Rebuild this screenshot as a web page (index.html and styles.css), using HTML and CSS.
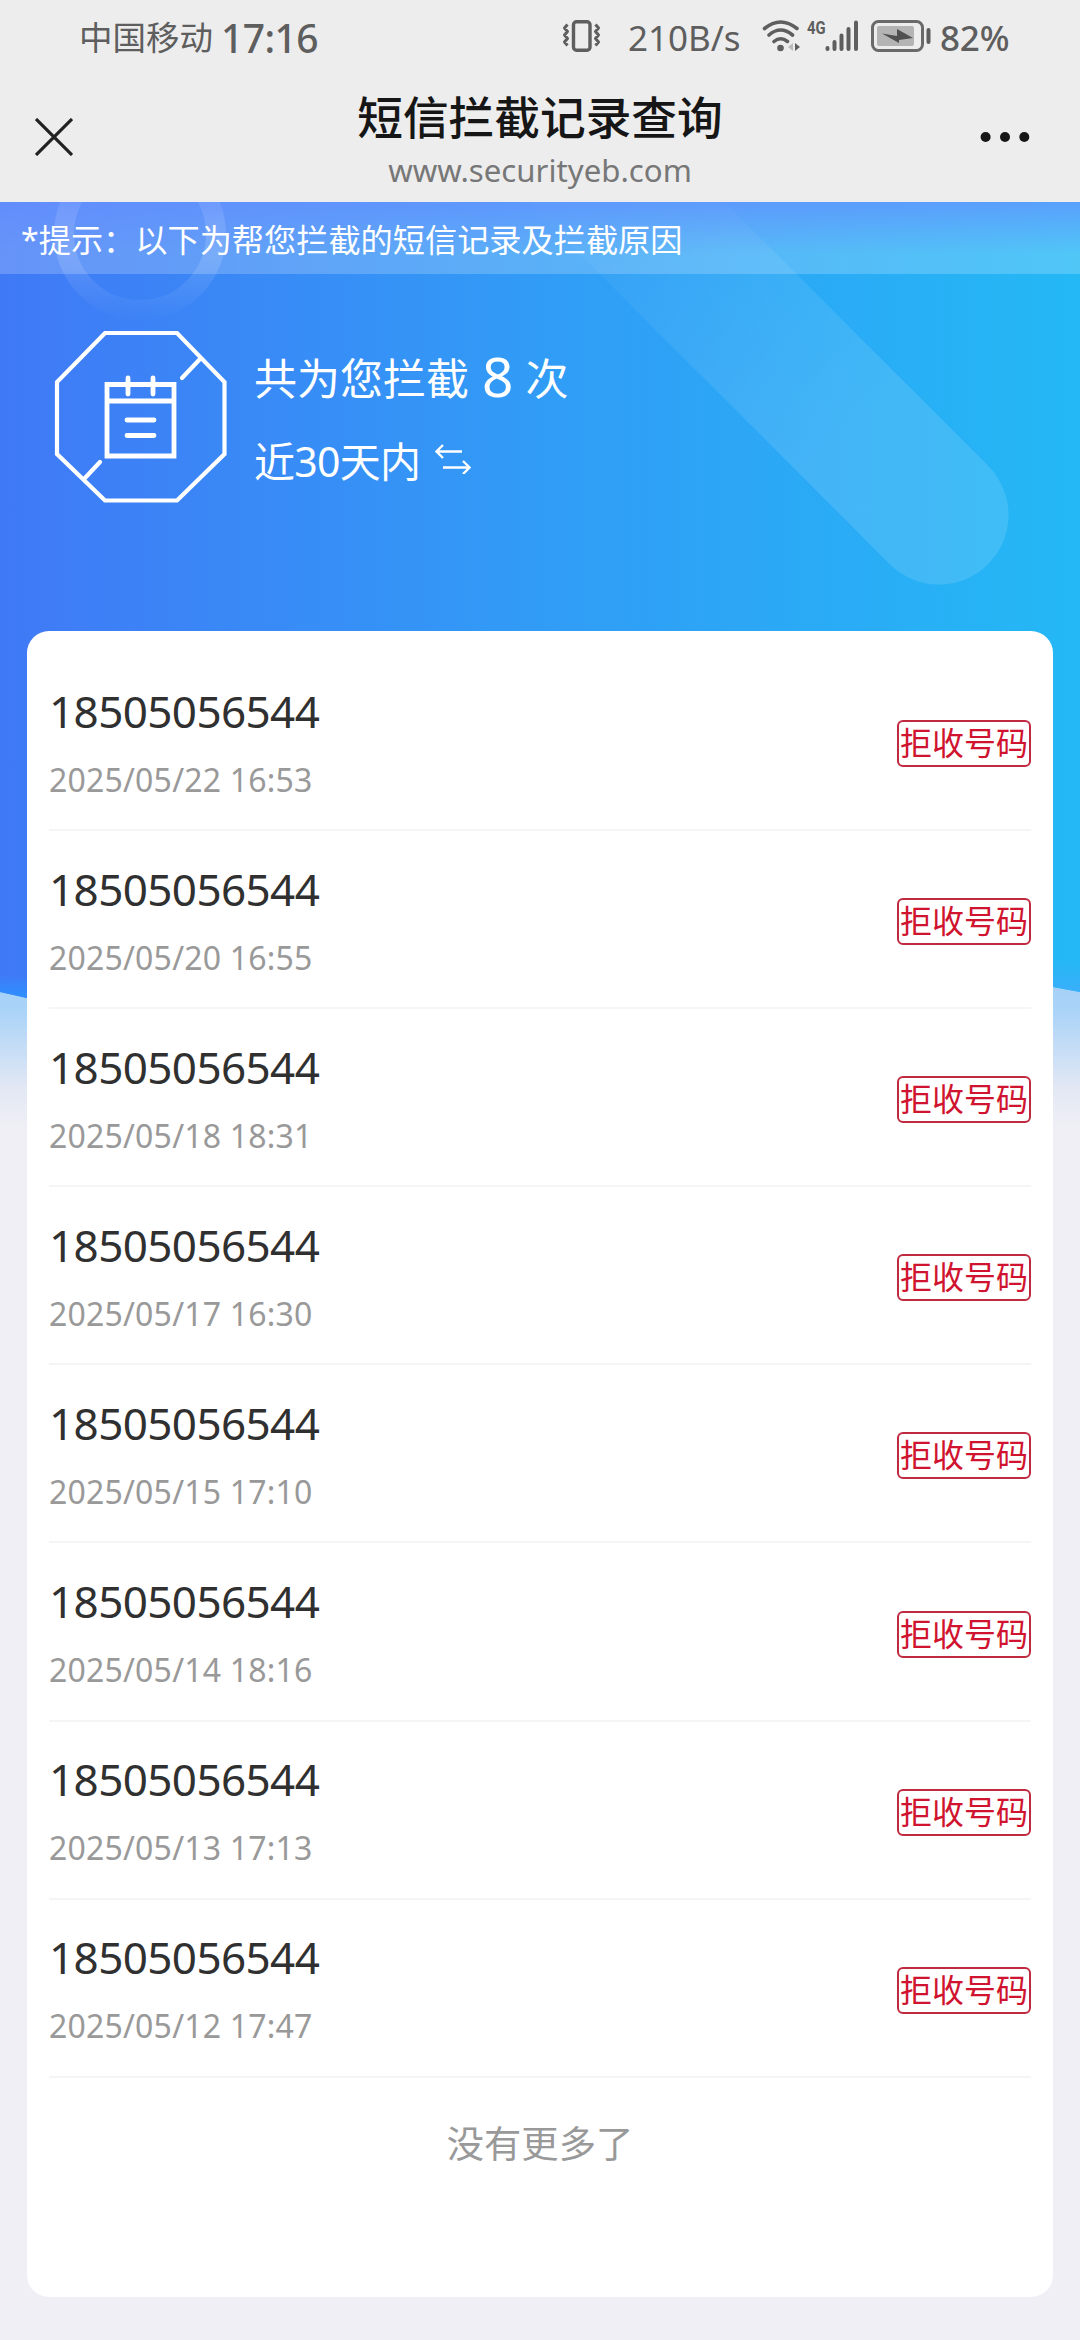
FILE: index.html
```html
<!DOCTYPE html>
<html lang="zh-CN">
<head>
<meta charset="utf-8">
<title>短信拦截记录查询</title>
<link rel="stylesheet" href="styles.css">
</head>
<body>
<header class="top">
  <div class="status">
    <span class="carrier">中国移动</span>
    <span class="clock">17:16</span>
    <svg class="vibrate" width="40" height="32" viewBox="0 0 40 32" fill="none" stroke="#5e5e5e"><rect x="11.500" y="1.800" width="16.500" height="28.500" rx="3" stroke-width="3.400"/><path d="M5.500 5l-3 3.500 3 3.500-3 3.500 3 3.500-3 3.500 3 3.500M33.500 5l3 3.500-3 3.500 3 3.500-3 3.500 3 3.500-3 3.500" transform="translate(0 -.5)" stroke-width="3" stroke-linejoin="round"/></svg>
    <span class="speed">210B/s</span>
    <svg class="wifi" width="40" height="32" viewBox="0 0 40 32" fill="none" stroke="#5e5e5e" stroke-width="3.600" stroke-linecap="round"><path d="M2.500 8.500Q18.500 -4.500 35 8.500M7 15Q18.500 5 30.500 15M12 21.500Q18.500 16 25.500 21.500"/><circle cx="18.500" cy="28" r="3.300" fill="#5e5e5e" stroke="none"/><path d="M31 23v8l-5-4z" fill="#bbb" stroke="none"/><path d="M33 23v8l5-4z" fill="#5e5e5e" stroke="none"/></svg>
    <span class="net">4G</span>
    <svg class="signal" width="34" height="32" viewBox="0 0 34 32" stroke="#5e5e5e" stroke-width="4" stroke-linecap="round"><path d="M2.500 28v1M9.500 22v7M16.500 15.500v13.500M23.500 9v20M31 2.500v26.500"/></svg>
    <svg class="battery" width="60" height="32" viewBox="0 0 60 32"><rect x="1.500" y="1.500" width="50" height="29" rx="6" fill="none" stroke="#6a6a6a" stroke-width="3"/><rect x="6" y="6" width="37" height="20" rx="2" fill="#b4b4b4"/><path d="M11 13.500L26 16V9L42 18L28 20V23z" fill="#505050"/><path d="M57.500 10v12" stroke="#5e5e5e" stroke-width="4" stroke-linecap="round"/></svg>
    <span class="percent">82%</span>
  </div>
  <div class="nav">
    <svg class="close" width="38" height="38" viewBox="0 0 38 38" stroke="#222" stroke-width="3.200"><path d="M1 1L37 37M37 1L1 37"/></svg>
    <div class="titles">
      <h1 class="title">短信拦截记录查询</h1>
      <div class="url">www.securityeb.com</div>
    </div>
    <svg class="more" width="50" height="12" viewBox="0 0 50 12" fill="#161616"><circle cx="5.600" cy="6" r="5"/><circle cx="25" cy="6" r="5"/><circle cx="44.300" cy="6" r="5"/></svg>
  </div>
</header>
<main class="page">
  <svg class="art" width="1080" height="960" viewBox="0 202 1080 960">
    <defs>
      <linearGradient id="sea"><stop offset="0" stop-color="#4079f6"/><stop offset=".5" stop-color="#319cf6"/><stop offset="1" stop-color="#24b8f5"/></linearGradient>
      <linearGradient id="glow" x1="0" y1="0" x2="0" y2="1"><stop offset="0" stop-color="#a2cff8"/><stop offset=".3" stop-color="#aad3f8"/><stop offset=".75" stop-color="#e2e8f4"/><stop offset="1" stop-color="#f0eff5"/></linearGradient>
      <linearGradient id="edge" x1="0" y1="0" x2="0" y2="1"><stop offset="0" stop-color="#2e90ff" stop-opacity="0"/><stop offset="1" stop-color="#2e90ff"/></linearGradient>
      <linearGradient id="edge2" x1="0" y1="0" x2="0" y2="1"><stop offset="0" stop-color="#3aaefa" stop-opacity="0"/><stop offset="1" stop-color="#3aaefa"/></linearGradient>
      <linearGradient id="beam" gradientUnits="userSpaceOnUse" x1="610" y1="190" x2="850" y2="430"><stop offset="0" stop-color="#fff" stop-opacity=".02"/><stop offset="1" stop-color="#fff" stop-opacity=".12"/></linearGradient>
      <linearGradient id="halo" gradientUnits="userSpaceOnUse" x1="0" y1="202" x2="0" y2="320"><stop offset="0" stop-color="#fff" stop-opacity=".24"/><stop offset=".55" stop-color="#fff" stop-opacity=".12"/><stop offset="1" stop-color="#fff" stop-opacity="0"/></linearGradient>
    </defs>
    <rect y="960" width="1080" height="170" fill="url(#glow)"/>
    <path d="M0 202H1080V992L1053 987L27 998L0 992z" fill="url(#sea)"/>
    <path d="M0 974L27 980V998L0 992z" fill="url(#edge)"/>
    <path d="M1053 960H1080V992L1053 987z" fill="url(#edge2)"/>
    <path d="M580 156L939 515" stroke="url(#beam)" stroke-width="139" stroke-linecap="round"/>
    <circle cx="140" cy="234" r="76" fill="none" stroke="url(#halo)" stroke-width="20"/>
  </svg>
  <p class="tip">*提示：以下为帮您拦截的短信记录及拦截原因</p>
  <section class="summary">
    <svg class="emblem" width="174" height="174" viewBox="53 329 174 174" fill="none" stroke="#fff" stroke-width="4.200" stroke-linecap="round"><path d="M105 333H177L224.500 382V454L177 500.500H105L57 454V382z"/><path d="M200 359L182 378M85 478L100 462"/><path d="M107 384.500H174V456H107zM107 401H174M128 378V394M153 378V394M127 420H154M127 435.500H154" stroke-width="4.800"/></svg>
    <div class="facts">
      <div class="count">共为您拦截<span class="num">8</span>次</div>
      <div class="range">近30天内<svg class="swap" width="38" height="30" viewBox="0 0 38 30" fill="none" stroke="#fff" stroke-width="2.400"><path d="M28 7.500H2.500M9 1L2.500 7.500L9 14M9 23.500H35.500M29 17L35.500 23.500L29 30"/></svg></div>
    </div>
  </section>
  <section class="card">
    <ul class="records">
      <li class="record"><div><div class="phone">18505056544</div><div class="time">2025/05/22 16:53</div></div><span class="tag">拒收号码</span></li>
      <li class="record"><div><div class="phone">18505056544</div><div class="time">2025/05/20 16:55</div></div><span class="tag">拒收号码</span></li>
      <li class="record"><div><div class="phone">18505056544</div><div class="time">2025/05/18 18:31</div></div><span class="tag">拒收号码</span></li>
      <li class="record"><div><div class="phone">18505056544</div><div class="time">2025/05/17 16:30</div></div><span class="tag">拒收号码</span></li>
      <li class="record"><div><div class="phone">18505056544</div><div class="time">2025/05/15 17:10</div></div><span class="tag">拒收号码</span></li>
      <li class="record"><div><div class="phone">18505056544</div><div class="time">2025/05/14 18:16</div></div><span class="tag">拒收号码</span></li>
      <li class="record"><div><div class="phone">18505056544</div><div class="time">2025/05/13 17:13</div></div><span class="tag">拒收号码</span></li>
      <li class="record"><div><div class="phone">18505056544</div><div class="time">2025/05/12 17:47</div></div><span class="tag">拒收号码</span></li>
    </ul>
    <div class="end">没有更多了</div>
  </section>
</main>
</body>
</html>
```
FILE: styles.css
```css
* { box-sizing: border-box; margin: 0; padding: 0; }
body {
  width: 1080px;
  height: 2340px;
  overflow: hidden;
  background: #f0eff5;
  font-family: "Noto Sans", "Noto Sans CJK SC", sans-serif;
}
svg { display: block; flex: none; }

.top { height: 202px; background: #ededed; }
.status {
  display: flex;
  align-items: center;
  height: 72px;
  padding-left: 79px;
  color: #5e5e5e;
  line-height: 72px;
  white-space: nowrap;
}
.carrier { width: 142px; font-size: 33.5px; padding-top: 2px; }
.clock { width: 341px; font-size: 39px; font-weight: 500; letter-spacing: -0.6px; padding-top: 4px; }
.vibrate { margin-right: 26px; }
.speed { width: 134px; font-size: 35px; letter-spacing: 0; padding-top: 3px; }
.net {
  width: 21px;
  margin-left: 5px;
  padding-bottom: 16px;
  font-family: Roboto, sans-serif;
  font-size: 19px;
  font-weight: 700;
  line-height: 18px;
  transform: scaleX(.78);
  transform-origin: left;
}
.signal { margin-left: -3px; margin-right: 12px; }
.percent { margin-left: 9px; font-size: 35px; font-weight: 500; letter-spacing: -.2px; padding-top: 3px; }

.nav {
  display: grid;
  grid-template-columns: 50px 1fr 50px;
  align-items: center;
  height: 130px;
  padding: 0 50px 0 35px;
}
.titles { padding-left: 15px; text-align: center; }
.title { padding-top: 2px; color: #161616; font-size: 45.7px; font-weight: 500; line-height: 64px; }
.url { color: #777; font-size: 31.2px; line-height: 42px; }

.page { position: relative; padding: 0 27px; }
.art { position: absolute; left: 0; top: 0; z-index: -1; }
.tip {
  height: 72px;
  margin: 0 -27px;
  padding-left: 21px;
  background: linear-gradient(rgba(112, 150, 255, .7), rgba(255, 255, 255, .2) 72%);
  color: #fff;
  font-size: 32.2px;
  line-height: 76px;
}
.summary { display: flex; gap: 27px; height: 357px; padding: 55px 0 0 26px; color: #fff; }
.count { display: flex; align-items: center; height: 94px; font-size: 43px; }
.num { margin: 0 12px 0 13px; font-size: 55px; line-height: 80px; }
.range { display: flex; align-items: center; height: 72px; font-size: 41px; letter-spacing: -.7px; }
.swap { margin-left: 14px; }

.card { height: 1666px; padding: 22px 22px 0; background: #fff; border-radius: 22px; }
.records { list-style: none; }
.record {
  display: flex;
  align-items: center;
  justify-content: space-between;
  height: 178.1px;
  border-bottom: 2px solid #f5f5f5;
}
.phone { padding-top: 8px; color: #303030; font-size: 44px; line-height: 66px; letter-spacing: -.6px; }
.time { padding-top: 3px; color: #999; font-size: 32px; line-height: 66px; letter-spacing: .2px; }
.tag {
  width: 134px;
  height: 47px;
  margin-top: 5px;
  border: 2px solid #c02a40;
  border-radius: 6px;
  color: #d0142f;
  font-size: 32px;
  line-height: 42px;
  text-align: center;
}
.end { padding-top: 38px; color: #999; font-size: 37.3px; line-height: 56px; text-align: center; }
```
